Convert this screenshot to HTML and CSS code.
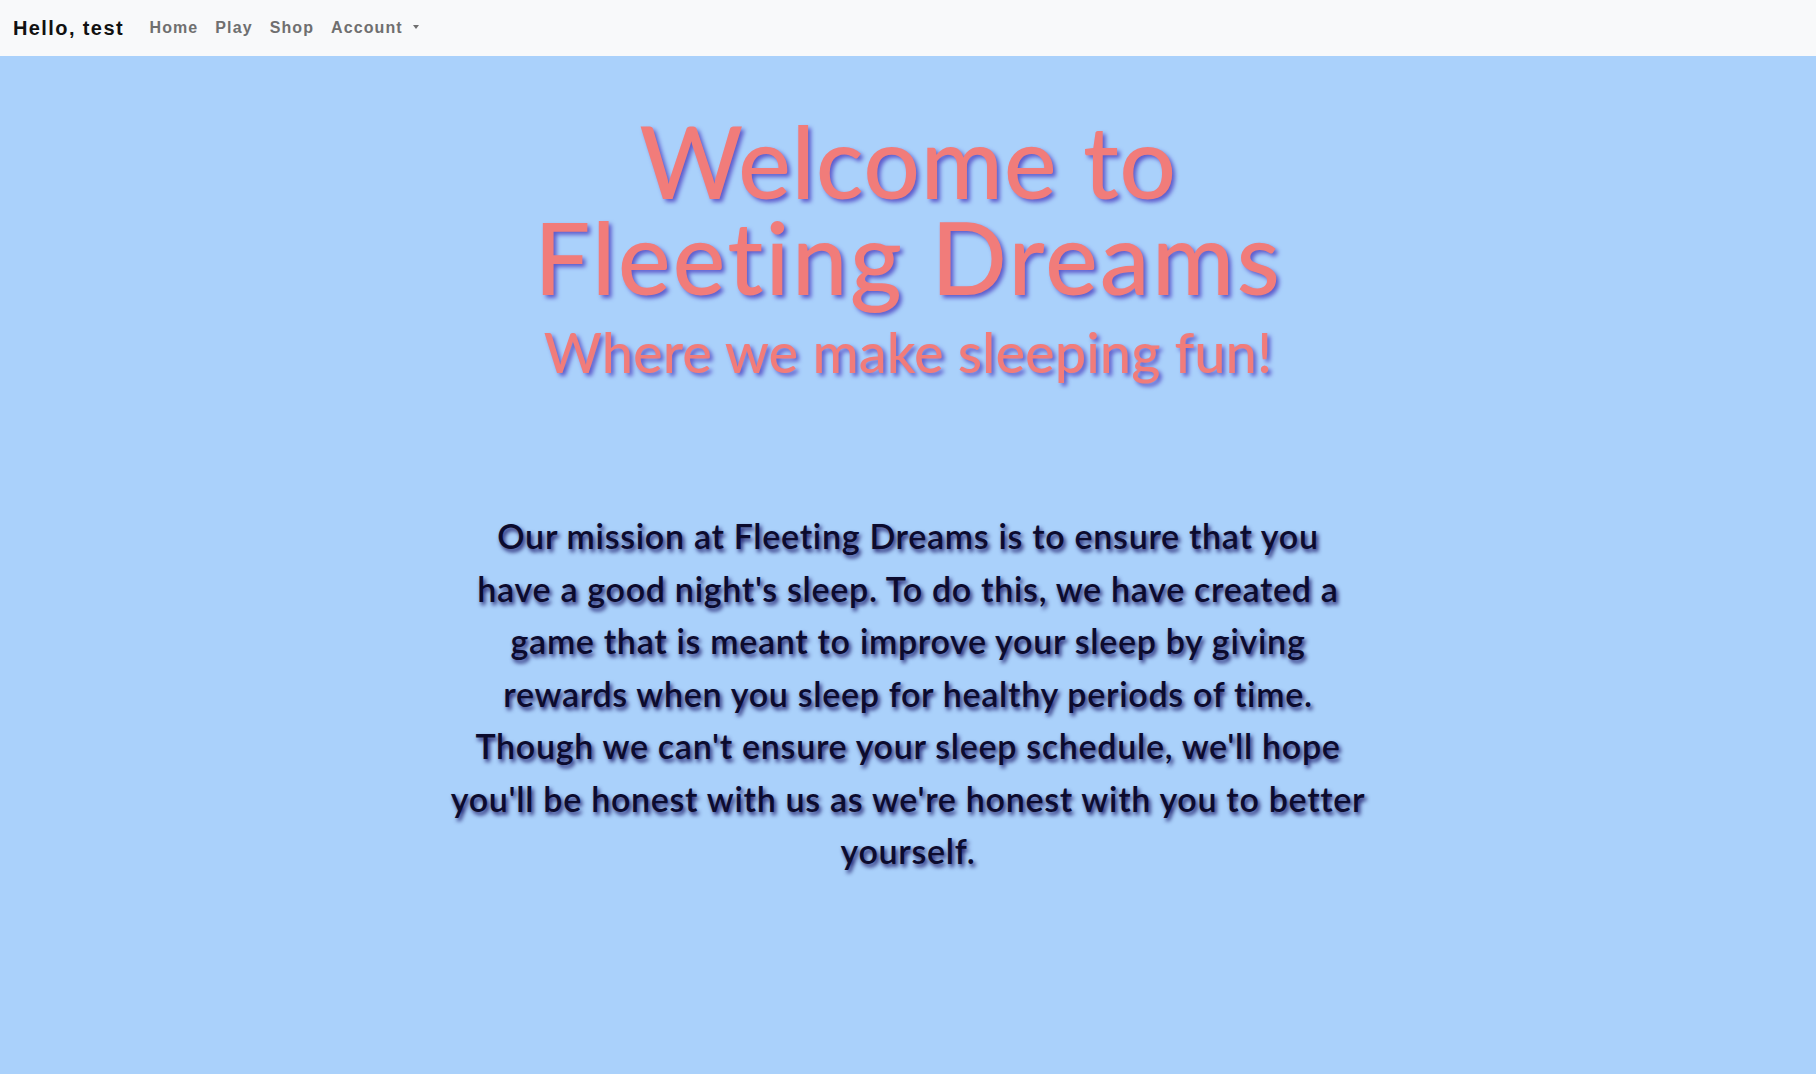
FILE: index.html
```html
<!DOCTYPE html>
<html lang="en">
<head>
<meta charset="utf-8">
<title>Fleeting Dreams</title>
<link rel="stylesheet" href="styles.css">
</head>
<body>
<nav class="navbar">
  <span class="brand">Hello, test</span>
  <ul class="nav">
    <li><a class="nav-link" href="#">Home</a></li>
    <li><a class="nav-link" href="#">Play</a></li>
    <li><a class="nav-link" href="#">Shop</a></li>
    <li><a class="nav-link dropdown" href="#">Account<span class="caret"></span></a></li>
  </ul>
</nav>
<main class="hero">
  <h1 class="title"><span class="title-line">Welcome to</span><span class="title-line">Fleeting Dreams</span></h1>
  <h2 class="subtitle">Where we make sleeping fun!</h2>
  <p class="mission">Our mission at Fleeting Dreams is to ensure that you<br>have a good night's sleep. To do this, we have created a<br>game that is meant to improve your sleep by giving<br>rewards when you sleep for healthy periods of time.<br>Though we can't ensure your sleep schedule, we'll hope<br>you'll be honest with us as we're honest with you to better<br>yourself.</p>
</main>
</body>
</html>
```
FILE: styles.css
```css
html, body {
  margin: 0;
  padding: 0;
}
body {
  background: #aad1fb;
  min-height: 100vh;
  font-family: "Lato", "Liberation Sans", sans-serif;
}
.navbar {
  height: 56px;
  box-sizing: border-box;
  background: #f8f9fa;
  display: flex;
  align-items: center;
  padding: 0 12px 0 13px;
  font-family: "Liberation Sans", Arial, sans-serif;
  font-weight: bold;
}
.brand {
  font-size: 20px;
  letter-spacing: 1.4px;
  color: #111;
  margin-right: 17px;
}
.nav {
  list-style: none;
  margin: 0;
  padding: 0;
  display: flex;
}
.nav-link {
  display: flex;
  align-items: center;
  padding: 8px 8.5px;
  font-size: 16px;
  letter-spacing: 1.1px;
  color: #6f6f6f;
  text-decoration: none;
}
.caret {
  display: inline-block;
  margin-left: 10px;
  border-top: 4px solid #6f6f6f;
  border-left: 3.5px solid transparent;
  border-right: 3.5px solid transparent;
  margin-top: -2px;
}
.hero {
  text-align: center;
  padding-top: 56px;
}
.title {
  margin: 0;
  font-size: 100px;
  line-height: 96px;
  font-weight: 500;
  color: #f17c7a;
  text-shadow: 3px 3px 4px #5f5ccc;
}
.title-line {
  display: block;
}
.title-line:first-child {
  letter-spacing: 0.5px;
}
.title-line:last-child {
  letter-spacing: 2px;
}
.subtitle {
  margin: 14px 0 0;
  font-size: 56px;
  line-height: 67px;
  font-weight: 500;
  color: #f17c7a;
  text-shadow: 3px 3px 4px #5f5ccc;
}
.mission {
  width: 1100px;
  margin: 125px auto 0;
  font-size: 34px;
  line-height: 52.5px;
  font-weight: 600;
  letter-spacing: 0.7px;
  color: #0c0b2e;
  text-shadow: 2px 3px 4px #1c1a6a;
}
```
